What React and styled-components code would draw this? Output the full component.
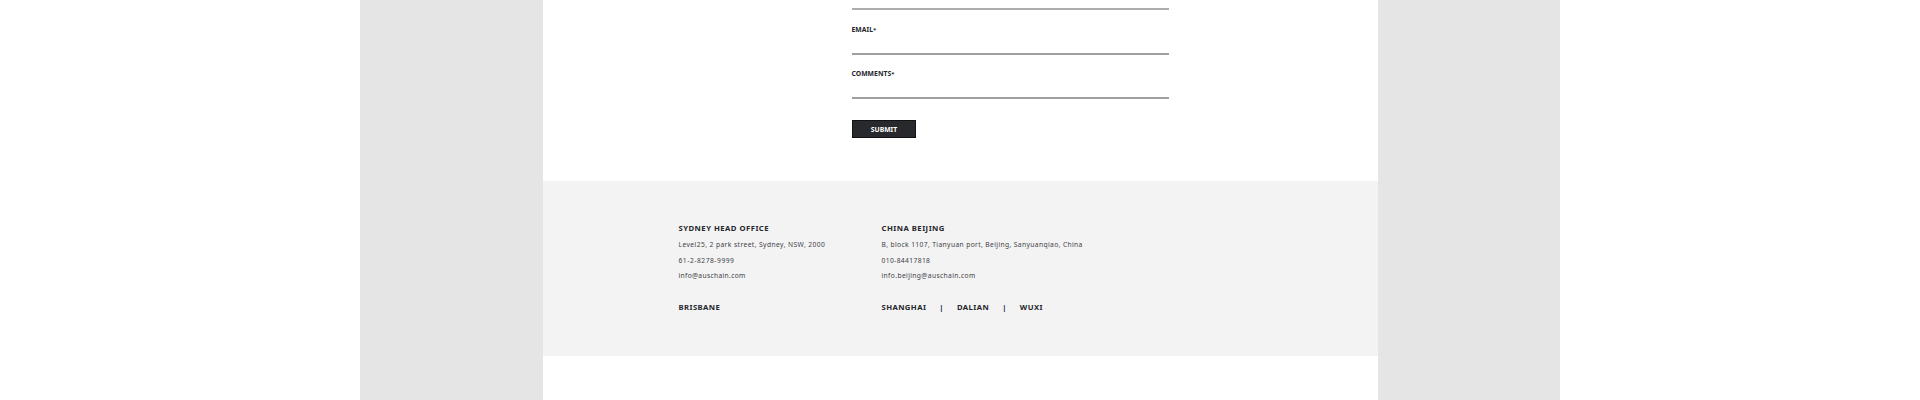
import React from 'react';
import styled, { createGlobalStyle } from 'styled-components';

const GlobalStyle = createGlobalStyle`
  * {
    box-sizing: border-box;
  }

  body {
    margin: 0;
    background: #fff;
    font-family: 'Noto Sans', sans-serif;
    color: #25262b;
  }
`;

const Backdrop = styled.div`
  width: 1200px;
  height: 400px;
  margin: 0 auto;
  padding: 0 182px 0 183px;
  background: #e5e5e5;
  overflow: hidden;
`;

const Page = styled.main`
  height: 100%;
  background: #fff;
`;

const Form = styled.form`
  height: 181px;
  padding: 8px 0 0 309px;
`;

const Divider = styled.div`
  width: 317px;
  height: 2px;
  margin-bottom: 1px;
  background: #adadad;
`;

const Field = styled.label`
  display: block;
  width: 317px;
  height: 44px;
  padding-top: 14px;
  border-bottom: 2px solid #a0a0a0;
  font-size: 6.8px;
  font-weight: 700;
  line-height: 10px;
  letter-spacing: 0.03px;
  text-indent: -0.5px;

  span {
    font-size: 6px;
  }
`;

const Button = styled.button`
  display: block;
  width: 64px;
  height: 18px;
  margin-top: 21px;
  padding: 1px 0 0;
  border: 1px solid #111216;
  background: #27292d;
  color: #fff;
  font: 700 6.8px/15px 'Noto Sans', sans-serif;
`;

const Footer = styled.footer`
  display: flex;
  height: 175px;
  padding: 39px 0 0 135.5px;
  background: #f3f3f3;
`;

const Office = styled.address`
  width: 203px;
  font-style: normal;
  white-space: nowrap;
`;

const Title = styled.h2`
  margin: 0 0 1px;
  font-size: 7.7px;
  line-height: 16px;
  letter-spacing: 0.48px;
`;

const Line = styled.p`
  margin: 0;
  color: #414247;
  font-size: 6.7px;
  line-height: 15.7px;
  letter-spacing: ${({ $spacing }) => $spacing || '0.38px'};
`;

const Cities = styled.div`
  display: flex;
  gap: 13px;
  margin-top: 15px;
  font-size: 7.7px;
  font-weight: 700;
  line-height: 16px;
  letter-spacing: 0.42px;
`;

const App = () => (
  <>
    <GlobalStyle />
    <Backdrop>
      <Page>
        <Form>
          <Divider />
          <Field>
            EMAIL<span>*</span>
          </Field>
          <Field>
            COMMENTS<span>*</span>
          </Field>
          <Button type="button">SUBMIT</Button>
        </Form>
        <Footer>
          <Office>
            <Title>SYDNEY HEAD OFFICE</Title>
            <Line $spacing="0.42px">
              Level25, 2 park street, Sydney, NSW, 2000
            </Line>
            <Line $spacing="0.53px">61-2-8278-9999</Line>
            <Line $spacing="0.33px">info@auschain.com</Line>
            <Cities>BRISBANE</Cities>
          </Office>
          <Office>
            <Title>CHINA BEIJING</Title>
            <Line>B, block 1107, Tianyuan port, Beijing, Sanyuanqiao, China</Line>
            <Line>010-84417818</Line>
            <Line>info.beijing@auschain.com</Line>
            <Cities>
              <span>SHANGHAI</span>
              <span>|</span>
              <span>DALIAN</span>
              <span>|</span>
              <span>WUXI</span>
            </Cities>
          </Office>
        </Footer>
      </Page>
    </Backdrop>
  </>
);

export default App;
